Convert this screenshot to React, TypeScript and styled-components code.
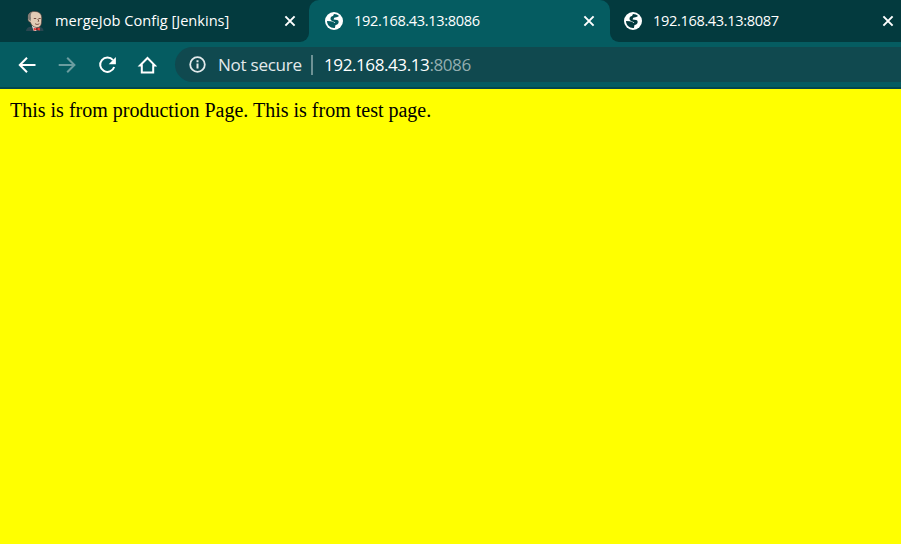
import React from "react";
import styled, { createGlobalStyle } from "styled-components";

const Global = createGlobalStyle`
  html, body { margin: 0; padding: 0; background: #ffff00; }
  *, *::before, *::after { box-sizing: border-box; }
`;

const Browser = styled.div`
  display: flex;
  flex-direction: column;
  width: 901px;
  height: 544px;
  overflow: hidden;
  font-family: "Open Sans", "Segoe UI", sans-serif;
  color: #fff;
  background: #055c61;
`;

const TabStrip = styled.div`
  display: flex;
  height: 42px;
  background: #055c61;
`;

const Tab = styled.div<{ $width: number; $left: number; $active?: boolean; $radius: string }>`
  display: flex;
  align-items: center;
  flex: none;
  width: ${(p) => p.$width}px;
  height: 42px;
  padding-left: ${(p) => p.$left}px;
  border-radius: ${(p) => p.$radius};
  background: ${(p) => (p.$active ? "#055c61" : "#033a3e")};
`;

/* The dark strip shows behind the rounded top corners of the active tab. */
const ActiveSlot = styled.div`
  flex: none;
  height: 42px;
  background: linear-gradient(#033a3e 12px, #055c61 12px);
`;

const TabTitle = styled.span<{ $spacing: number }>`
  width: 229px;
  margin-left: 11px;
  padding-bottom: 2px;
  font-size: 14.6px;
  line-height: 20px;
  letter-spacing: ${(p) => p.$spacing}px;
  white-space: nowrap;
`;

const Toolbar = styled.div`
  display: flex;
  align-items: center;
  height: 45px;
  padding-left: 17px;
`;

const NavButtons = styled.div`
  display: flex;
  gap: 20px;
  width: 158px;
  svg { display: block; flex: none; }
`;

const AddressBar = styled.div`
  display: flex;
  align-items: center;
  flex: 1;
  height: 35px;
  padding-left: 14px;
  border-radius: 17.5px 0 0 17.5px;
  background: #10494f;
  font-size: 17.1px;
  line-height: 24px;
  white-space: nowrap;
`;

const Security = styled.span`
  width: 93px;
  margin-left: 12px;
  color: #e3eaeb;
  letter-spacing: -0.29px;
`;

const Divider = styled.span`
  width: 2px;
  height: 20px;
  margin-right: 11px;
  background: #6e9295;
`;

const Address = styled.span`
  letter-spacing: -0.45px;
`;

const Port = styled.span`
  color: #94aeb0;
`;

const Page = styled.main`
  flex: 1;
  padding: 9px 10px;
  border-top: 2px solid #04474b;
  background: #ffff00;
  color: #000;
  font: 20px/24px "Liberation Serif", "Times New Roman", serif;
`;

const CloseIcon = () => (
  <svg width="12" height="12" viewBox="0 0 12 12">
    <path d="M1.4 1.4 10.6 10.6M10.6 1.4 1.4 10.6" stroke="#fff" strokeWidth="2" />
  </svg>
);

const GlobeIcon = ({ sea }: { sea: string }) => (
  <svg width="18" height="18" viewBox="0 0 18 18">
    <circle cx="9" cy="9" r="9" fill="#fff" />
    <path
      fill={sea}
      d="M9 2C11 2 12.9 2.8 14.1 4.1L12.3 5.1 9.2 5.8 8.6 7.4 12.1 8.1C13.3 8.4 13.8 9.3 13.6 10.4 13.3 12 12.1 12.9 10.5 12.9L9.9 15.9C5.5 16.4 2.1 13.1 2 9L5.6 9.3C7.6 9.4 8.8 10.1 9.2 11.1L10.3 10.4 7.2 9C6 8.4 5.4 7.6 5.5 6.5 5.6 5 6.6 4.2 8 4Z"
    />
  </svg>
);

const JenkinsIcon = () => (
  <svg width="18" height="20" viewBox="0 0 18 20">
    <path d="M0 20c.3-2.7 1.7-4.2 5-4.3l8 .1c3 .2 4.3 1.8 4.5 4.2Z" fill="#294650" />
    <path d="m5.7 14.6 5.3 2.2-.8 3.2H7.8Z" fill="#e4e6df" />
    <path d="M2.1 7.5C1.5 2.9 4.3.3 8.8.5c4.8 0 7.2 2.8 6.9 7.5l-.3 4.1c-.3 3.1-2.3 4.8-5 4.4-3.5-.5-5.1-2.6-6-5.3C2.5 11 1.7 8.8 2.1 7.5Z" fill="#e2cbb5" stroke="#56423c" strokeWidth=".65" />
    <path d="M2.2 8C1.6 3.9 3 1.8 5.9.9 4.7 3 4.5 5 5 7.2l-.4 3.4Z" fill="#7f7b75" />
    <path d="M7.8 7.5h2.4m2.3 0h2.2M11.8 8l1 2.2-1 .2M9.1 12.7c1.4 1 2.8 1 4.2 0" fill="none" stroke="#755044" strokeWidth="1" />
    <path d="m7.5 16.8 2.8.7 3.5-1 .2 3.1-3.4-.7-2.8.8Z" fill="#e53b38" />
    <path d="M10 17h1.7v2H10Z" fill="#8b2326" />
  </svg>
);

const InfoIcon = () => (
  <svg width="17" height="17" viewBox="0 0 17 17">
    <circle cx="8.5" cy="8.5" r="7.3" fill="none" stroke="#e3eaeb" strokeWidth="1.8" />
    <path d="M8.5 4.2v2M8.5 7.4v5.1" stroke="#e3eaeb" strokeWidth="2" />
  </svg>
);

export default function App() {
  return (
    <>
      <Global />
      <Browser>
        <TabStrip>
          <Tab $width={309} $left={26} $radius="0 0 9px 0">
            <JenkinsIcon />
            <TabTitle $spacing={0}>mergeJob Config [Jenkins]</TabTitle>
            <CloseIcon />
          </Tab>
          <ActiveSlot>
            <Tab $active $width={301} $left={16} $radius="10px 10px 0 0">
              <GlobeIcon sea="#055c61" />
              <TabTitle $spacing={-0.36}>192.168.43.13:8086</TabTitle>
              <CloseIcon />
            </Tab>
          </ActiveSlot>
          <Tab $width={291} $left={14} $radius="0 0 0 9px">
            <GlobeIcon sea="#033a3e" />
            <TabTitle $spacing={-0.36}>192.168.43.13:8087</TabTitle>
            <CloseIcon />
          </Tab>
        </TabStrip>
        <Toolbar>
          <NavButtons>
            <svg width="20" height="20" viewBox="0 0 20 20" fill="none" stroke="#fff" strokeWidth="2">
              <path d="M18.5 10H3.5M10 2.8 2.8 10l7.2 7.2" />
            </svg>
            <svg width="20" height="20" viewBox="0 0 20 20" fill="none" stroke="#6b9da0" strokeWidth="2">
              <path d="M1.7 10h15M10.2 2.8l7.2 7.2-7.2 7.2" />
            </svg>
            <svg width="20" height="20" viewBox="0 0 20 20" fill="none">
              <path d="M16 5.2A7.2 7.2 0 1 0 17.2 12" stroke="#fff" strokeWidth="2" />
              <path d="M18.9 2v7.2h-7.2Z" fill="#fff" />
            </svg>
            <svg width="20" height="20" viewBox="0 0 20 20" fill="none" stroke="#fff" strokeWidth="2">
              <path d="M3 10.6h1.8v7h11.4v-7H18L10.5 3Z" />
            </svg>
          </NavButtons>
          <AddressBar>
            <InfoIcon />
            <Security>Not secure</Security>
            <Divider />
            <Address>192.168.43.13<Port>:8086</Port></Address>
          </AddressBar>
        </Toolbar>
        <Page>This is from production Page. This is from test page.</Page>
      </Browser>
    </>
  );
}
